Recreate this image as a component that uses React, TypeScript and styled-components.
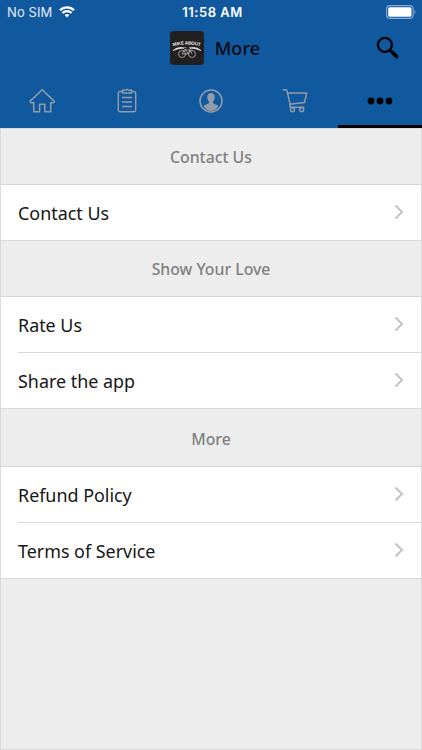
import React from 'react';
import styled, { createGlobalStyle } from 'styled-components';

const GlobalStyle = createGlobalStyle`
  * { box-sizing: border-box; }
  body { margin: 0; background: #ededed; font-family: "Noto Sans", sans-serif; }
`;

const Screen = styled.div`
  width: 422px;
  height: 750px;
  display: flex;
  flex-direction: column;
  overflow: hidden;
  background: #ededed;
`;

const Header = styled.header`
  height: 128px;
  background: #11599e;
  display: flex;
  flex-direction: column;
`;

const StatusBar = styled.div`
  height: 24px;
  padding: 0 5px 0 7px;
  display: grid;
  grid-template-columns: 1fr auto 1fr;
  align-items: center;
  color: #fff;
  font-family: Inter, sans-serif;
  font-size: 13px;
  line-height: 24px;
`;

const Carrier = styled.div`
  display: flex;
  align-items: center;
  gap: 7px;
  color: #e4edf6;
  letter-spacing: 0.1px;
`;

const Clock = styled.div`
  font-weight: 600;
  font-size: 13px;
  letter-spacing: 0.5px;
  padding-left: 1px;
`;

const BatterySlot = styled.div`
  display: flex;
  justify-content: flex-end;
`;

const TitleBar = styled.div`
  height: 48px;
  display: grid;
  grid-template-columns: 1fr auto 1fr;
  align-items: center;
  padding: 0 22px;
`;

const Brand = styled.div`
  grid-column: 2;
  display: flex;
  align-items: center;
  gap: 11px;
  padding-left: 8px;
`;

const Title = styled.h1`
  margin: 0;
  font-size: 18px;
  font-weight: 500;
  line-height: 24px;
  letter-spacing: 0.1px;
  color: #05090e;
`;

const SearchButton = styled.button`
  justify-self: end;
  display: flex;
  padding: 0;
  border: 0;
  background: none;
`;

const Tabs = styled.nav`
  height: 56px;
  display: grid;
  grid-template-columns: repeat(5, 1fr);
`;

const Tab = styled.button<{ $active?: boolean }>`
  display: flex;
  align-items: center;
  justify-content: center;
  padding: 4px 0 0;
  border: 0;
  border-bottom: 3px solid ${p => (p.$active ? '#000' : 'transparent')};
  background: none;
  color: ${p => (p.$active ? '#000' : '#929da9')};
`;

const Content = styled.main`
  flex: 1;
  border: 1px solid #dadadd;
`;

const SectionTitle = styled.h2<{ $height: number }>`
  height: ${p => p.$height}px;
  margin: 0;
  padding-top: ${p => p.$height - 56}px;
  display: flex;
  align-items: center;
  justify-content: center;
  border-bottom: 1px solid #d6d6d8;
  color: #808080;
  font-size: 15.8px;
  font-weight: 500;
`;

const Row = styled.a`
  height: 56px;
  padding-left: 17px;
  display: flex;
  background: #fff;
  color: #161616;
  font-size: 17.9px;
`;

const RowBody = styled.div<{ $last?: boolean }>`
  flex: 1;
  margin-left: ${p => (p.$last ? '-17px' : '0')};
  padding: 0 17px 1px ${p => (p.$last ? '17px' : '0')};
  display: flex;
  align-items: center;
  justify-content: space-between;
  border-bottom: 1px solid #d9d9db;
`;

const Label = styled.span`
  padding-top: 2px;
`;

const Wifi = () => (
  <svg width="16" height="12" viewBox="0 0 16 12" fill="none" stroke="#fff" strokeWidth="2.2">
    <path d="M1 4.300a10 10 0 0 1 14 0M3.400 7a6.600 6.600 0 0 1 9.200 0" />
    <path d="M8 11.500 5.600 9.100a3.400 3.400 0 0 1 4.800 0z" fill="#fff" stroke="none" />
  </svg>
);

const Battery = () => (
  <svg width="31" height="14" viewBox="0 0 31 14">
    <rect x=".6" y=".6" width="26.5" height="12.8" rx="3.3" fill="none" stroke="#8aadd0" strokeWidth="1.1" />
    <rect x="2.2" y="2.2" width="23.3" height="9.6" rx="1.6" fill="#fff" />
    <path d="M28.5 4.8q2 2.2 0 4.4z" fill="#8aadd0" />
  </svg>
);

const LogoMark = () => (
  <svg width="34" height="34" viewBox="0 0 34 34">
    <rect width="34" height="34" rx="4" fill="#221f21" />
    <defs>
      <path id="logo-arc" d="M3 15.400Q17 11.500 31 15.400" />
    </defs>
    <text fill="#f1f1f1" fontFamily="Liberation Sans, sans-serif" fontSize="4.600" fontWeight="700" letterSpacing="-.15">
      <textPath href="#logo-arc">MIKE ABOUT</textPath>
    </text>
    <path d="M3 19.600Q8 15.200 14 17Q8 17.300 3 19.600M31 19.600Q26 15.200 20 17Q26 17.300 31 19.600" fill="#fff" stroke="#eee" strokeWidth=".7" />
    <g fill="none" stroke="#c8c8c8" strokeWidth=".7">
      <circle cx="12" cy="23" r="3.500" />
      <circle cx="22" cy="23" r="3.500" />
      <path d="m12 23 3-5 3.300 5H12m3-4h5.200l-2 4m2-4 1.800 4M14 16.700h2.400m2.400 0h2l-1 2.200" />
    </g>
  </svg>
);

const SearchIcon = () => (
  <svg width="24" height="24" viewBox="0 0 24 24" fill="none" stroke="#000">
    <circle cx="8.900" cy="8.900" r="7" strokeWidth="2.200" />
    <path d="m13.900 14 2 2" strokeWidth="2.200" />
    <path d="m15.800 15.800 4.900 4.800" strokeWidth="3.600" strokeLinecap="round" />
  </svg>
);

const HomeIcon = () => (
  <svg width="28" height="26" viewBox="0 0 28 26" fill="none" stroke="currentColor" strokeWidth="1.500" strokeLinejoin="round">
    <path d="M14.200 1.700 1.900 13.400l1.200 1.300h2.600v9.100h5.900v-7.600h5.200v7.600h5.900v-9.100h2.600l1.200-1.300z" />
  </svg>
);

const ClipboardIcon = () => (
  <svg width="20" height="26" viewBox="0 0 20 26" fill="none" stroke="currentColor" strokeWidth="1.400" strokeLinejoin="round">
    <path d="M5.500 3.500H3a1.700 1.700 0 0 0-1.700 1.700V22A1.700 1.700 0 0 0 3 23.700h14a1.700 1.700 0 0 0 1.700-1.700V5.200A1.700 1.700 0 0 0 17 3.500h-2.500" />
    <path d="M5.500 2.200h2.700q1.800-1.500 3.600 0h2.700V5h-9zM5 9.500h10M5 14h10M5 18.500h10" />
  </svg>
);

const ProfileIcon = () => (
  <svg width="26" height="26" viewBox="0 0 26 26" fill="currentColor">
    <circle cx="13" cy="13" r="11" fill="none" stroke="currentColor" strokeWidth="1.500" />
    <path d="M9.300 9c0-3 1.500-4.100 3.700-4.100S16.700 6 16.700 9c0 2.100-.8 3.600-1.700 4.500v1.800l5.500 2.400q-2.500 5.300-7.500 5.300t-7.500-5.300l5.500-2.400v-1.800C10.100 12.600 9.300 11.100 9.300 9z" />
  </svg>
);

const CartIcon = () => (
  <svg width="26" height="26" viewBox="0 0 26 26" fill="none" stroke="currentColor" strokeWidth="1.500" strokeLinecap="round" strokeLinejoin="round">
    <path d="M1.200 1.700h2.300q1.200 0 1.500 1.200L8.200 16.500M5.600 5h19.100l-2.200 9.500-14.700 1.800M8.200 16.500q-1 2.700 1 2.700h12.500" />
    <circle cx="10.400" cy="21.800" r="2" />
    <circle cx="19.700" cy="21.800" r="2" />
  </svg>
);

const DotsIcon = () => (
  <svg width="26" height="8" viewBox="0 0 26 8" fill="currentColor">
    <circle cx="4" cy="4" r="3.400" />
    <circle cx="13" cy="4" r="3.400" />
    <circle cx="22" cy="4" r="3.400" />
  </svg>
);

const Chevron = () => (
  <svg width="10" height="16" viewBox="0 0 10 16" fill="none" stroke="#c5c5c9" strokeWidth="2">
    <path d="m1.500 1.500 6.500 6.500-6.500 6.500" />
  </svg>
);

const sections = [
  { title: 'Contact Us', height: 56, rows: ['Contact Us'] },
  { title: 'Show Your Love', height: 56, rows: ['Rate Us', 'Share the app'] },
  { title: 'More', height: 58, rows: ['Refund Policy', 'Terms of Service'] },
];

export default function App() {
  return (
    <Screen>
      <GlobalStyle />
      <Header>
        <StatusBar>
          <Carrier>No SIM <Wifi /></Carrier>
          <Clock>11:58 AM</Clock>
          <BatterySlot><Battery /></BatterySlot>
        </StatusBar>
        <TitleBar>
          <Brand><LogoMark /><Title>More</Title></Brand>
          <SearchButton aria-label="Search"><SearchIcon /></SearchButton>
        </TitleBar>
        <Tabs>
          <Tab aria-label="Home"><HomeIcon /></Tab>
          <Tab aria-label="Orders"><ClipboardIcon /></Tab>
          <Tab aria-label="Profile"><ProfileIcon /></Tab>
          <Tab aria-label="Cart"><CartIcon /></Tab>
          <Tab aria-label="More" $active><DotsIcon /></Tab>
        </Tabs>
      </Header>
      <Content>
        {sections.map(section => (
          <section key={section.title}>
            <SectionTitle $height={section.height}>{section.title}</SectionTitle>
            {section.rows.map((label, i) => (
              <Row key={label}>
                <RowBody $last={i === section.rows.length - 1}>
                  <Label>{label}</Label>
                  <Chevron />
                </RowBody>
              </Row>
            ))}
          </section>
        ))}
      </Content>
    </Screen>
  );
}
